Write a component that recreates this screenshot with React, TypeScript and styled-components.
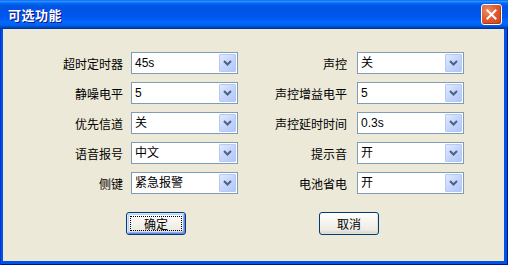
import React from "react";
import styled, { createGlobalStyle } from "styled-components";

const GlobalStyle = createGlobalStyle`
  html, body {
    margin: 0;
    padding: 0;
    background: #ece9d8;
  }
  body {
    font-family: "Liberation Sans", "Noto Sans CJK SC", sans-serif;
    font-size: 12px;
    color: #000;
  }
`;

const Window = styled.div`
  width: 508px;
  height: 265px;
  display: flex;
  flex-direction: column;
  box-sizing: border-box;
  background: #0054e3;
  box-shadow: inset 1px 0 #0831d9, inset -1px -1px #00138c;
`;

const TitleBar = styled.div`
  height: 29px;
  flex: none;
  display: flex;
  align-items: center;
  justify-content: space-between;
  padding: 0 6px 0 8px;
  background: linear-gradient(
    to bottom,
    #0058ee 0%,
    #3593ff 4%,
    #288eff 6%,
    #127dff 8%,
    #036ffc 10%,
    #0262ee 14%,
    #0057e5 20%,
    #0054e3 24%,
    #0055eb 56%,
    #005bf5 66%,
    #026afe 76%,
    #0062ef 86%,
    #0052d6 92%,
    #0040ab 96%,
    #003092 100%
  );
`;

const Title = styled.span`
  color: #fff;
  font-family: "Noto Sans CJK SC", sans-serif;
  font-size: 13px;
  font-weight: bold;
  letter-spacing: 0.5px;
  text-shadow: 1px 1px #0f1089;
`;

const CloseButton = styled.button`
  width: 21px;
  height: 21px;
  padding: 0;
  display: flex;
  align-items: center;
  justify-content: center;
  box-sizing: border-box;
  border: 1px solid #fff;
  border-radius: 3px;
  background: radial-gradient(circle at 30% 30%, #f08c64 0%, #e25a30 45%, #c8421c 100%);
  box-shadow: inset -1px -1px #b0381a;
`;

const Body = styled.div`
  flex: 1;
  margin: 0 4px 4px 3px;
  background: #ece9d8;
  display: flex;
  flex-direction: column;
  padding-top: 23px;
`;

const Fields = styled.div`
  display: flex;
  gap: 10px;
`;

const FieldColumn = styled.div<{ $labelWidth: number; $gap: number }>`
  display: grid;
  grid-template-columns: ${(p) => p.$labelWidth}px 107px;
  column-gap: ${(p) => p.$gap}px;
  row-gap: 8px;
  align-items: center;
`;

const Label = styled.span`
  text-align: right;
  font-family: "Noto Sans CJK SC", sans-serif;
  font-size: 12px;
  white-space: nowrap;
`;

const Combo = styled.div`
  height: 22px;
  box-sizing: border-box;
  border: 1px solid #7f9db9;
  background: #fff;
  display: flex;
  align-items: center;
  padding: 1px;
`;

const ComboText = styled.span`
  flex: 1;
  padding-left: 2px;
  font-size: 12px;
  line-height: 18px;
`;

const DropButton = styled.span`
  width: 17px;
  height: 18px;
  box-sizing: border-box;
  border: 1px solid #b5c8f6;
  border-radius: 1px;
  background: linear-gradient(135deg, #e1eafe 0%, #c6d6fc 50%, #b2c7f8 100%);
  display: flex;
  align-items: center;
  justify-content: center;
`;

const Buttons = styled.div`
  display: flex;
  gap: 133px;
  padding: 18px 0 0 123px;
`;

const PushButton = styled.button<{ $default?: boolean }>`
  width: 60px;
  height: 23px;
  padding: 0;
  box-sizing: border-box;
  border: 1px solid #003c74;
  border-radius: 3px;
  font-family: "Noto Sans CJK SC", sans-serif;
  font-size: 12px;
  color: #000;
  background: linear-gradient(to bottom, #fff 0%, #f6f5f0 40%, #ecebe6 80%, #d6d0c5 100%);
  box-shadow: ${(p) =>
    p.$default
      ? "inset 1px 1px #cee7ff, inset -1px -1px #6982ee, inset 2px 2px #bcd4f6, inset -2px -2px #89ade4"
      : "inset -1px -1px #e3e2da"};
  position: relative;
  display: flex;
  align-items: center;
  justify-content: center;
`;

const FocusRing = styled.span`
  position: absolute;
  inset: 3px;
  border: 1px dotted #000;
  pointer-events: none;
`;

function Chevron() {
  return (
    <svg width="9" height="6" viewBox="0 0 9 6">
      <polyline points="1,1 4.5,4.5 8,1" fill="none" stroke="#4d6185" strokeWidth="2" />
    </svg>
  );
}

function CloseGlyph() {
  return (
    <svg width="11" height="11" viewBox="0 0 11 11">
      <path d="M1.5 1.5 L9.5 9.5 M9.5 1.5 L1.5 9.5" stroke="#fff" strokeWidth="2" strokeLinecap="square" />
    </svg>
  );
}

const leftFields = [
  ["超时定时器", "45s"],
  ["静噪电平", "5"],
  ["优先信道", "关"],
  ["语音报号", "中文"],
  ["侧键", "紧急报警"],
];

const rightFields = [
  ["声控", "关"],
  ["声控增益电平", "5"],
  ["声控延时时间", "0.3s"],
  ["提示音", "开"],
  ["电池省电", "开"],
];

function Field({ label, value }: { label: string; value: string }) {
  return (
    <>
      <Label>{label}</Label>
      <Combo>
        <ComboText>{value}</ComboText>
        <DropButton>
          <Chevron />
        </DropButton>
      </Combo>
    </>
  );
}

export default function App() {
  return (
    <>
      <GlobalStyle />
      <Window>
        <TitleBar>
          <Title>可选功能</Title>
          <CloseButton aria-label="close">
            <CloseGlyph />
          </CloseButton>
        </TitleBar>
        <Body>
          <Fields>
            <FieldColumn $labelWidth={120} $gap={8}>
              {leftFields.map(([l, v]) => (
                <Field key={l} label={l} value={v} />
              ))}
            </FieldColumn>
            <FieldColumn $labelWidth={99} $gap={10}>
              {rightFields.map(([l, v]) => (
                <Field key={l} label={l} value={v} />
              ))}
            </FieldColumn>
          </Fields>
          <Buttons>
            <PushButton $default>
              确定
              <FocusRing />
            </PushButton>
            <PushButton>取消</PushButton>
          </Buttons>
        </Body>
      </Window>
    </>
  );
}
